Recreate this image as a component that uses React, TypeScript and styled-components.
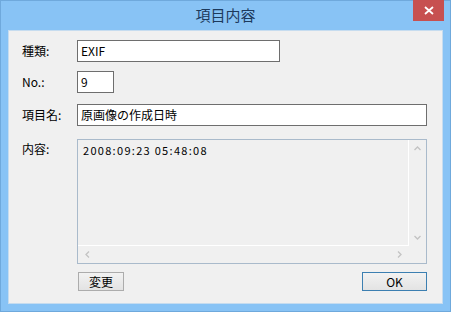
import React from 'react';
import styled, { createGlobalStyle } from 'styled-components';

const Global = createGlobalStyle`
  html, body { margin: 0; padding: 0; background: #88c3f5; }
  * { box-sizing: border-box; }
`;

const Window = styled.div`
  width: 451px;
  height: 312px;
  background: #88c3f5;
  border: 1px solid #6fa9dc;
  display: flex;
  flex-direction: column;
  font-family: "Noto Sans CJK JP", "DejaVu Sans", sans-serif;
`;

const TitleBar = styled.div`
  height: 29px;
  display: grid;
  grid-template-columns: 1fr auto 1fr;
  align-items: start;
`;

const Title = styled.div`
  grid-column: 2;
  padding-top: 4px;
  font-size: 15px;
  line-height: 20px;
  color: #1d3a5c;
`;

const CloseButton = styled.div`
  grid-column: 3;
  justify-self: end;
  margin-right: 6px;
  margin-top: -1px;
  width: 31px;
  height: 21px;
  background: #c75050;
  display: flex;
  align-items: center;
  justify-content: center;
`;

const Content = styled.div`
  flex: 1;
  margin: 0 7px 7px;
  background: #f0f0f0;
  border: 1px solid #c6dcef;
  padding: 9px 15px 0 13px;
  display: flex;
  flex-direction: column;
`;

const Row = styled.div<{ gap: number }>`
  display: grid;
  grid-template-columns: 55px 1fr;
  align-items: start;
  margin-bottom: ${p => p.gap}px;
`;

const Label = styled.div<{ top?: number }>`
  font-size: 12px;
  line-height: 14px;
  padding-top: ${p => p.top ?? 4}px;
  color: #000;
`;

const Field = styled.div<{ w?: number }>`
  width: ${p => (p.w ? `${p.w}px` : '100%')};
  height: 22px;
  background: #fff;
  border: 1px solid #6e6e6e;
  font-size: 12px;
  line-height: 14px;
  padding: 3px 3px;
  color: #000;
`;

const TextArea = styled.div`
  height: 125px;
  border: 1px solid #a9bacb;
  background: #f0f0f0;
  display: grid;
  grid-template-columns: 1fr 17px;
  grid-template-rows: 1fr 17px;
`;

const TextBody = styled.div`
  font-size: 11px;
  line-height: 13px;
  letter-spacing: 1.3px;
  padding: 4px 5px;
  color: #000;
  border-right: 1px solid #fff;
  border-bottom: 1px solid #fff;
`;

const VScroll = styled.div`
  display: flex;
  flex-direction: column;
  justify-content: space-between;
  align-items: center;
  padding: 5px 0 5px;
`;

const HScroll = styled.div`
  display: flex;
  justify-content: space-between;
  align-items: center;
  padding: 0 6px;
`;

const Buttons = styled.div`
  display: flex;
  justify-content: space-between;
  padding-left: 56px;
`;

const Button = styled.div<{ primary?: boolean }>`
  width: ${p => (p.primary ? 65 : 46)}px;
  height: 19px;
  border: 1px solid ${p => (p.primary ? '#3c7fb1' : '#acacac')};
  background: linear-gradient(#f2f2f2, #e3e3e3);
  font-size: 12px;
  line-height: 17px;
  text-align: center;
  color: #000;
`;

const Chevron = ({ dir }: { dir: 'up' | 'down' | 'left' | 'right' }) => {
  const rot = { up: 0, right: 90, down: 180, left: 270 }[dir];
  return (
    <svg width="7" height="7" viewBox="0 0 7 7" style={{ transform: `rotate(${rot}deg)` }}>
      <path d="M0.5 5 L3.5 2 L6.5 5" fill="none" stroke="#c3c3c3" strokeWidth="1.3" />
    </svg>
  );
};

export default function App() {
  return (
    <>
      <Global />
      <Window>
        <TitleBar>
          <Title>項目内容</Title>
          <CloseButton>
            <svg width="10" height="9" viewBox="0 0 10 9">
              <path d="M1 1 L9 8 M9 1 L1 8" stroke="#fff" strokeWidth="1.8" />
            </svg>
          </CloseButton>
        </TitleBar>
        <Content>
          <Row gap={9}>
            <Label>種類:</Label>
            <Field w={203}>EXIF</Field>
          </Row>
          <Row gap={11}>
            <Label>No.:</Label>
            <Field w={37}>9</Field>
          </Row>
          <Row gap={13}>
            <Label>項目名:</Label>
            <Field>原画像の作成日時</Field>
          </Row>
          <Row gap={8}>
            <Label top={3}>内容:</Label>
            <TextArea>
              <TextBody>2008:09:23 05:48:08</TextBody>
              <VScroll>
                <Chevron dir="up" />
                <Chevron dir="down" />
              </VScroll>
              <HScroll>
                <Chevron dir="left" />
                <Chevron dir="right" />
              </HScroll>
              <div />
            </TextArea>
          </Row>
          <Buttons>
            <Button>変更</Button>
            <Button primary>OK</Button>
          </Buttons>
        </Content>
      </Window>
    </>
  );
}
